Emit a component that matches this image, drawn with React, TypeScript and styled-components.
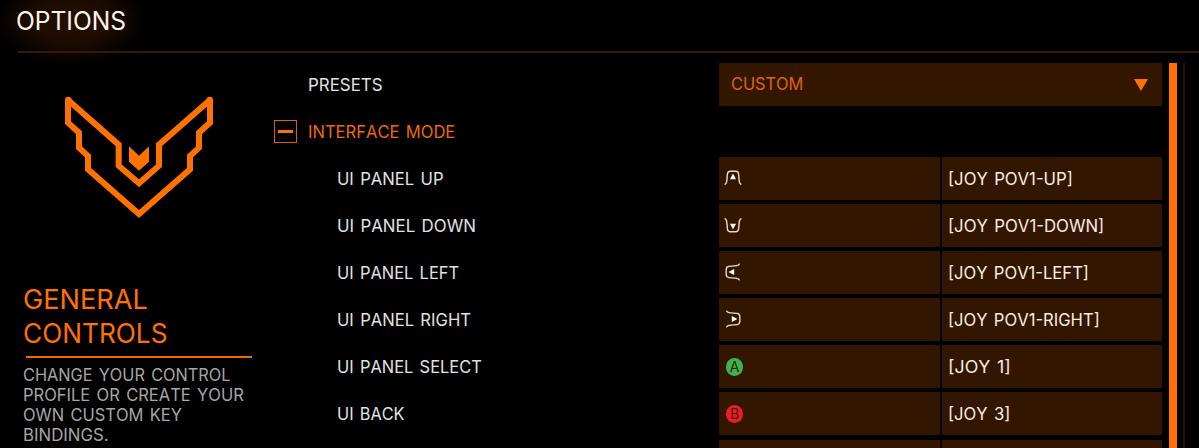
import React, { useLayoutEffect, useRef, useState } from "react";
import styled, { createGlobalStyle } from "styled-components";

const orange = "#ff7100";
const panel = "#331600";

const GlobalStyle = createGlobalStyle`
  * { box-sizing: border-box; }
  html, body { margin: 0; background: #000; overflow: hidden; }
  body { font-family: Inter, "Liberation Sans", sans-serif; color: #e4e4e4; }
`;

const Screen = styled.div`
  display: flex;
  flex-direction: column;
  width: 1199px;
  height: 448px;
  overflow: hidden;
  background: #000;
`;

const Header = styled.header`
  flex: none;
  height: 63px;
  padding-left: 18px;
  background: radial-gradient(ellipse 78px 44px at 71px 21px, #241000 0%, #1c0c00 50%, #0a0400 80%, #000 100%);
`;

const Title = styled.h1`
  margin: 0;
  height: 51px;
  padding-top: 6px;
  margin-left: -2px;
  font-size: 25px;
  line-height: 30px;
  font-weight: 400;
  color: #fff4ea;
`;

const HeaderRule = styled.div`
  height: 2px;
  background: #371804;
`;

const Main = styled.main`
  flex: 1;
  display: flex;
  min-height: 0;
`;

const Sidebar = styled.aside`
  flex: none;
  width: 274px;
  padding-left: 23px;
`;

const Emblem = styled.svg`
  display: block;
  width: 180px;
  height: 150px;
  margin: 17px 0 0 27px;
`;

const Heading = styled.h2`
  margin: 52px 0 0;
  width: 229px;
  height: 77px;
  font-size: 26.5px;
  line-height: 34px;
  font-weight: 400;
  color: ${orange};
`;

const HeadingRule = styled.div`
  width: 226px;
  height: 2px;
  margin: -3px 0 0 3px;
  background: #f06a00;
`;

const Description = styled.p`
  margin: 7px 0 0;
  font-size: 16.8px;
  line-height: 20px;
  color: #a6a6a6;
`;

const Options = styled.section`
  flex: none;
  width: 888px;
  display: flex;
  flex-direction: column;
  gap: 4.07px;
`;

const Row = styled.div`
  flex: none;
  display: grid;
  grid-template-columns: 445px 443px;
  height: 43px;
`;

const Label = styled.div<{ $indent: number; $active?: boolean }>`
  display: flex;
  align-items: center;
  padding-left: ${(p) => p.$indent}px;
  font-size: 16.8px;
  color: ${(p) => (p.$active ? "#ee6a00" : "#e2e2e2")};
`;

const Collapse = styled.button`
  display: grid;
  place-items: center;
  flex: none;
  width: 23px;
  height: 23px;
  margin: 0 11px 0 0;
  padding: 0;
  border: 1.5px solid #dd6200;
  background: #000;
`;

const Minus = styled.span`
  width: 15px;
  height: 3px;
  background: ${orange};
`;

const Select = styled.div`
  display: flex;
  align-items: center;
  justify-content: space-between;
  padding: 0 14px 2px 12px;
  background: ${panel};
  color: #e06400;
  font-size: 16.8px;
`;

const Arrow = styled.svg`
  width: 14px;
  height: 12px;
  margin-top: 3px;
`;

const Bindings = styled.div`
  display: grid;
  grid-template-columns: 221px 220px;
  gap: 2px;
`;

const Binding = styled.div`
  display: flex;
  align-items: center;
  padding-left: 6px;
  background: ${panel};
  color: #fbece1;
  font-size: 16.8px;
`;

const Glyph = styled.svg`
  width: 18px;
  height: 18px;
  margin: 0 0 1px -0.8px;
`;

const ButtonGlyph = styled.span<{ $color: string }>`
  display: grid;
  place-items: center;
  width: 17.5px;
  height: 17.5px;
  margin-left: 0.8px;
  border-radius: 50%;
  background: ${(p) => p.$color};
  color: #38200a;
  font-size: 14px;
  line-height: 17px;
`;

const Scrollbar = styled.div`
  display: flex;
  gap: 6px;
  margin-left: 7px;
`;

const Thumb = styled.div`
  width: 8px;
  background: ${orange};
`;

const Track = styled.div`
  width: 2px;
  background: #2a1200;
`;

const Line = styled.span`
  display: block;
  width: max-content;
  white-space: pre;
  word-spacing: 0.1em;
  font-kerning: none;
  transform-origin: 0 50%;
`;

/* One line of extended capitals, widened to fill the given width. */
function Wide({ width, children }: { width: number; children: string }) {
  const ref = useRef<HTMLSpanElement>(null);
  const [scale, setScale] = useState(1);
  useLayoutEffect(() => {
    setScale(width / ref.current!.offsetWidth);
  }, [width, children]);
  return (
    <Line ref={ref} style={{ transform: `scaleX(${scale})` }}>
      {children}
    </Line>
  );
}

function PadGlyph({ turn }: { turn: number }) {
  return (
    <Glyph viewBox="0 0 18 18">
      <g transform={`rotate(${turn} 9 9)`}>
        <path
          d="M.6 15.6C2.4 15 2.7 13.6 2.9 11L3.4 5C3.6 2.7 4.4 2.2 6.4 2.2H11.6C13.6 2.2 14.4 2.7 14.6 5L15.1 11C15.3 13.6 15.6 15 17.4 15.6"
          fill="none"
          stroke="#e6d9cf"
          strokeWidth="1.4"
        />
        <path d="M9 4.6 12 10.2H6Z" fill="#fff" />
      </g>
    </Glyph>
  );
}

const bindings = [
  { label: "UI PANEL UP", labelWidth: 107, icon: <PadGlyph turn={0} />, key: "[JOY POV1-UP]", keyWidth: 124.5 },
  { label: "UI PANEL DOWN", labelWidth: 138.5, icon: <PadGlyph turn={180} />, key: "[JOY POV1-DOWN]", keyWidth: 156 },
  { label: "UI PANEL LEFT", labelWidth: 122.5, icon: <PadGlyph turn={-90} />, key: "[JOY POV1-LEFT]", keyWidth: 140.5 },
  { label: "UI PANEL RIGHT", labelWidth: 133.5, icon: <PadGlyph turn={90} />, key: "[JOY POV1-RIGHT]", keyWidth: 151.5 },
  { label: "UI PANEL SELECT", labelWidth: 145, icon: <ButtonGlyph $color="#3bb54a">A</ButtonGlyph>, key: "[JOY 1]", keyWidth: 62.5 },
  { label: "UI BACK", labelWidth: 68, icon: <ButtonGlyph $color="#ed1c24">B</ButtonGlyph>, key: "[JOY 3]", keyWidth: 62.5 },
];

export default function App() {
  return (
    <Screen>
      <GlobalStyle />
      <Header>
        <Title><Wide width={110}>OPTIONS</Wide></Title>
        <HeaderRule />
      </Header>
      <Main>
        <Sidebar>
          <Emblem viewBox="0 0 540 450">
            <path
              d="M54 60V128L87 158V203L114 228V268L267 402L420 268V228L447 203V158L480 128V60L327 194V257L267 310L206 257V194Z"
              fill="none"
              stroke={orange}
              strokeWidth="18"
              strokeMiterlimit="2"
            />
            <circle cx="55" cy="60" r="10" fill={orange} />
            <circle cx="479" cy="60" r="10" fill={orange} />
            <path d="M237 199 267 227 297 199V245L267 272 237 245Z" fill={orange} />
          </Emblem>
          <Heading>
            <Wide width={125}>GENERAL</Wide>
            <Wide width={144.5}>CONTROLS</Wide>
          </Heading>
          <HeadingRule />
          <Description>
            <Wide width={208}>CHANGE YOUR CONTROL</Wide>
            <Wide width={220.5}>PROFILE OR CREATE YOUR</Wide>
            <Wide width={159}>OWN CUSTOM KEY</Wide>
            <Wide width={86}>BINDINGS.</Wide>
          </Description>
        </Sidebar>
        <Options>
          <Row>
            <Label $indent={34}><Wide width={74.5}>PRESETS</Wide></Label>
            <Select>
              <Wide width={72}>CUSTOM</Wide>
              <Arrow viewBox="0 0 14 12"><path d="M0 0H14L7 12Z" fill={orange} /></Arrow>
            </Select>
          </Row>
          <Row>
            <Label $indent={0} $active>
              <Collapse aria-label="Collapse"><Minus /></Collapse>
              <Wide width={147}>INTERFACE MODE</Wide>
            </Label>
          </Row>
          {bindings.map((b) => (
            <Row key={b.label}>
              <Label $indent={63}><Wide width={b.labelWidth}>{b.label}</Wide></Label>
              <Bindings>
                <Binding>{b.icon}</Binding>
                <Binding><Wide width={b.keyWidth}>{b.key}</Wide></Binding>
              </Bindings>
            </Row>
          ))}
          <Row>
            <Label $indent={63} />
            <Bindings>
              <Binding />
              <Binding />
            </Bindings>
          </Row>
        </Options>
        <Scrollbar>
          <Thumb />
          <Track />
        </Scrollbar>
      </Main>
    </Screen>
  );
}
